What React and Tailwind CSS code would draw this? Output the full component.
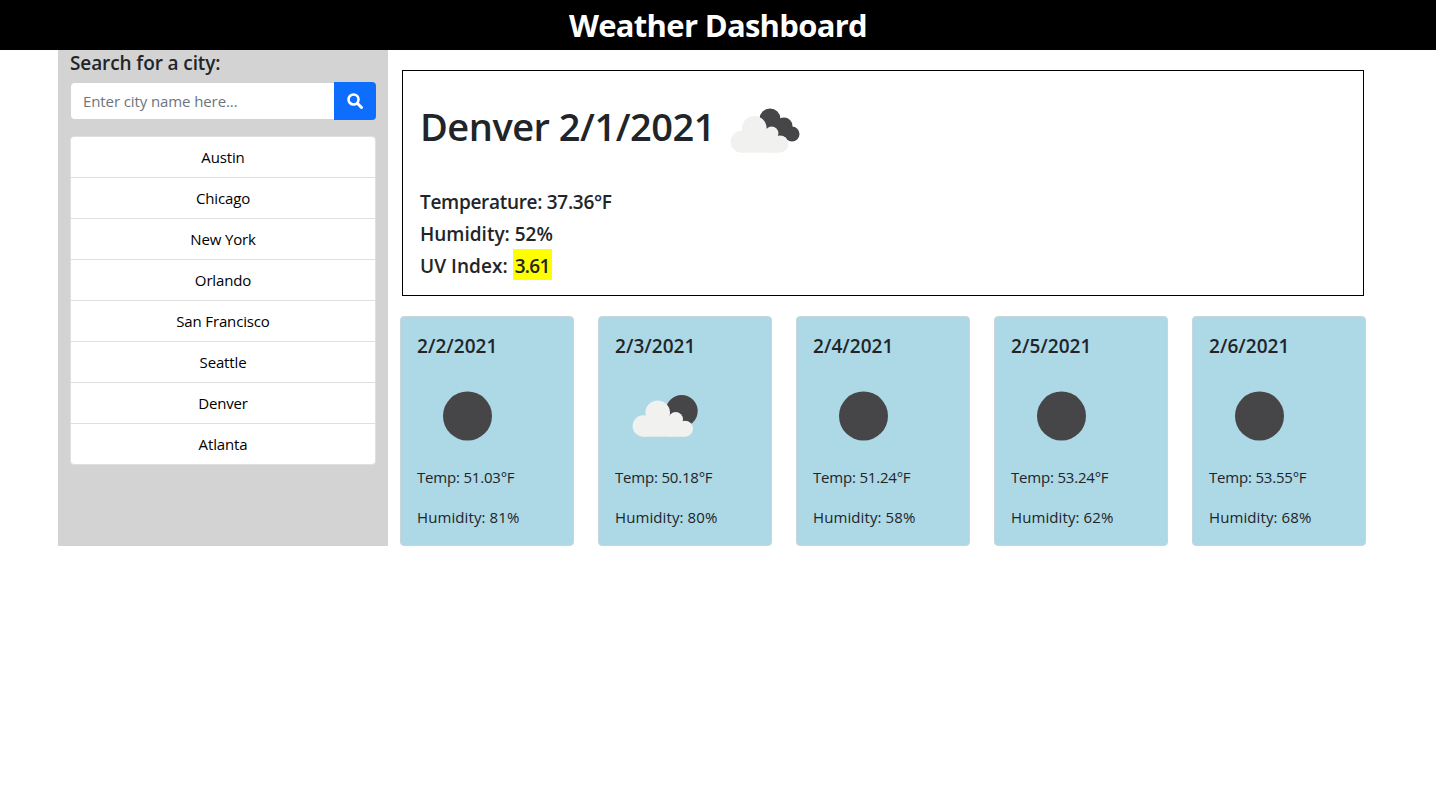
import React from "react";

function Sun() {
  return (
    <svg width="100" height="100" viewBox="0 0 100 100" className="block">
      <circle cx="50.5" cy="50" r="24.500" fill="#464547" />
    </svg>
  );
}

function PartCloud() {
  return (
    <svg width="100" height="100" viewBox="0 0 100 100" className="block">
      <circle cx="66.700" cy="45" r="16" fill="#464547" />
      <g fill="#f1f1f0">
        <circle cx="28.300" cy="60" r="10.700" />
        <circle cx="42.700" cy="46.700" r="12.300" />
        <circle cx="60.700" cy="53.300" r="7.300" />
        <circle cx="70" cy="62.700" r="8" />
        <rect x="28" y="50" width="30" height="20.700" />
        <rect x="55" y="58" width="15" height="12.700" />
      </g>
    </svg>
  );
}

function BrokenCloud() {
  return (
    <svg width="100" height="100" viewBox="0 0 100 100" className="block">
      <g fill="#464547">
        <circle cx="55" cy="42" r="10.500" />
        <circle cx="69" cy="49" r="8.500" />
        <circle cx="77" cy="57" r="7.500" />
        <rect x="55" y="44" width="18" height="16" />
      </g>
      <g fill="#f1f1f0">
        <circle cx="26.700" cy="64.700" r="11" />
        <circle cx="39.300" cy="51.300" r="12.300" />
        <circle cx="56.700" cy="56.300" r="6.700" />
        <circle cx="65" cy="67" r="8.500" />
        <rect x="27" y="52" width="30" height="23.700" />
        <rect x="50" y="60" width="15" height="15.700" />
      </g>
    </svg>
  );
}

const cities = ["Austin", "Chicago", "New York", "Orlando", "San Francisco", "Seattle", "Denver", "Atlanta"];
const days = [
  ["2/2/2021", "51.03", "81", Sun],
  ["2/3/2021", "50.18", "80", PartCloud],
  ["2/4/2021", "51.24", "58", Sun],
  ["2/5/2021", "53.24", "62", Sun],
  ["2/6/2021", "53.55", "68", Sun],
];

export default function App() {
  return (
    <div className="min-h-[811px] bg-white font-['Open_Sans',sans-serif] text-[#212529]">
      <header className="flex h-[50px] items-center justify-center bg-black text-[31px] font-bold tracking-[-0.7px] text-white">
        Weather Dashboard
      </header>
      <div className="mx-auto flex h-[496px] w-[1320px]">
        <aside className="w-[330px] bg-[#d3d3d3] px-3">
          <h2 className="mb-[5px] h-[27px] text-[19px] leading-[26px] font-semibold tracking-[-0.1px]">Search for a city:</h2>
          <div className="flex h-[38px]">
            <div className="ml-px flex h-[36px] flex-1 items-center self-center rounded-l-[4px] bg-white pl-[12px] text-[15px] tracking-[-0.1px] text-[#6c757d]">
              Enter city name here...
            </div>
            <button className="flex w-[42px] items-center justify-center rounded-r-[4px] bg-[#0d6efd] text-white">
              <svg width="16" height="16" viewBox="0 0 16 16" fill="none" stroke="currentColor">
                <circle cx="6.500" cy="6.500" r="5" strokeWidth="2.600" />
                <path d="M10.500 10.500 14.500 14.500" strokeWidth="3" strokeLinecap="round" />
              </svg>
            </button>
          </div>
          <ul className="mt-4 overflow-hidden rounded-[4px] border border-[#dfdfdf] bg-white">
            {cities.map((c, i) => (
              <li
                key={c}
                className={
                  i
                    ? "flex h-[41px] items-center justify-center border-t border-[#dfdfdf] text-[15px] tracking-[-0.15px] text-black"
                    : "flex h-[40px] items-center justify-center text-[15px] tracking-[-0.15px] text-black"
                }
              >
                {c}
              </li>
            ))}
          </ul>
        </aside>
        <main className="w-[990px]">
          <section className="mx-[14px] mt-5 h-[226px] border border-black pl-[17px]">
            <div className="flex h-[112px] items-center">
              <h1 className="mb-[2px] w-[295px] shrink-0 text-[38px] leading-[48px] font-semibold tracking-[-0.5px] whitespace-nowrap">Denver 2/1/2021</h1>
              <div className="h-[100px] w-[100px] shrink-0">
                <BrokenCloud />
              </div>
            </div>
            <div className="mt-[3px] text-[19px] leading-[32px] font-semibold">
              <p className="tracking-[-0.3px]">Temperature: 37.36°F</p>
              <p className="tracking-[0px]">Humidity: 52%</p>
              <p className="-mt-px tracking-[0.05px]">
                UV Index: <span className="inline-block h-[31px] bg-[#ffff00] px-[2px] leading-[34px] tracking-[-0.7px]">3.61</span>
              </p>
            </div>
          </section>
          <div className="mt-5 flex">
            {days.map(([date, temp, hum, Icon]) => (
              <div key={date} className="w-[198px] px-3">
                <article className="h-[230px] rounded-[4px] border border-[#c9d5da] bg-[#add8e6] px-4 pt-4">
                  <h5 className="text-[19px] leading-[26px] font-semibold tracking-[0.05px]">{date}</h5>
                  <div className="mt-[7px] h-[99px]">
                    <Icon />
                  </div>
                  <p className="text-[15px] leading-[24px] tracking-[-0.2px]">Temp: {temp}°F</p>
                  <p className="mt-4 text-[15px] leading-[24px] tracking-[0.1px]">Humidity: {hum}%</p>
                </article>
              </div>
            ))}
          </div>
        </main>
      </div>
    </div>
  );
}
